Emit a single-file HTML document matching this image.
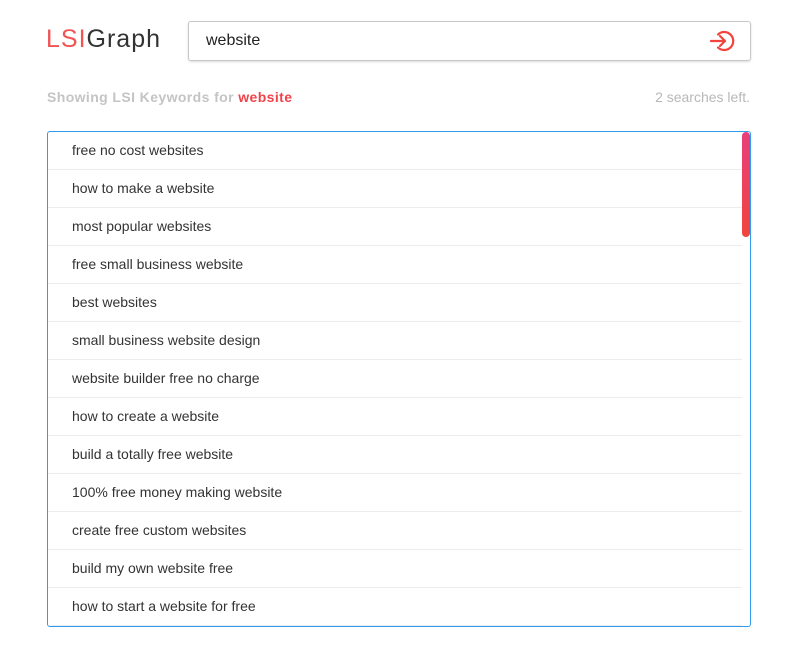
<!DOCTYPE html>
<html><head><style>
body{margin:0;background:#fff;font-family:"Liberation Sans",sans-serif;width:795px;height:645px;overflow:hidden;position:relative}
.logo{position:absolute;left:46px;top:25px;font-size:25px;letter-spacing:1px;color:#333;font-weight:300}
.logo span{color:#f05454}
.search{position:absolute;left:188px;top:21px;width:561px;height:38px;border:1px solid #c8c8c8;border-radius:3px;box-shadow:0 1px 2px rgba(0,0,0,.15)}
.search .t{position:absolute;left:17px;top:10px;font-size:16px;color:#222}
.search svg{position:absolute;left:520px;top:8px}
.show{position:absolute;left:47px;top:89px;font-size:14px;font-weight:bold;color:#c4c4c4;letter-spacing:.4px}
.show b{color:#f0434a}
.left{position:absolute;right:45px;top:89px;font-size:14px;color:#b8b8b8}
.box{position:absolute;left:47px;top:131px;width:702px;height:494px;border:1px solid #2f9bf0;border-radius:3px;overflow:hidden}
.row{height:38px;border-bottom:1px solid #ececec;width:694px;font-size:14px;color:#333;line-height:37px;padding-left:24px;box-sizing:border-box}
.sb{position:absolute;left:694px;top:0;width:8px;height:105px;border-radius:4px;background:linear-gradient(#e8407a,#f0443e)}
</style></head><body>
<div class="logo"><span>LSI</span>Graph</div>
<div class="search"><div class="t">website</div>
<svg width="26" height="22" viewBox="0 0 26 22" fill="none" stroke="#f0443e" stroke-width="2.2" stroke-linecap="round" stroke-linejoin="round"><path d="M2 11h14M11 6l5 5-5 5"/><path d="M9 4.5A9 9 0 1 1 9 17.5"/></svg></div>
<div class="show">Showing LSI Keywords for <b>website</b></div>
<div class="left">2 searches left.</div>
<div class="box">
<div class="row">free no cost websites</div>
<div class="row">how to make a website</div>
<div class="row">most popular websites</div>
<div class="row">free small business website</div>
<div class="row">best websites</div>
<div class="row">small business website design</div>
<div class="row">website builder free no charge</div>
<div class="row">how to create a website</div>
<div class="row">build a totally free website</div>
<div class="row">100% free money making website</div>
<div class="row">create free custom websites</div>
<div class="row">build my own website free</div>
<div class="row">how to start a website for free</div>
<div class="sb"></div>
</div>
</body></html>
